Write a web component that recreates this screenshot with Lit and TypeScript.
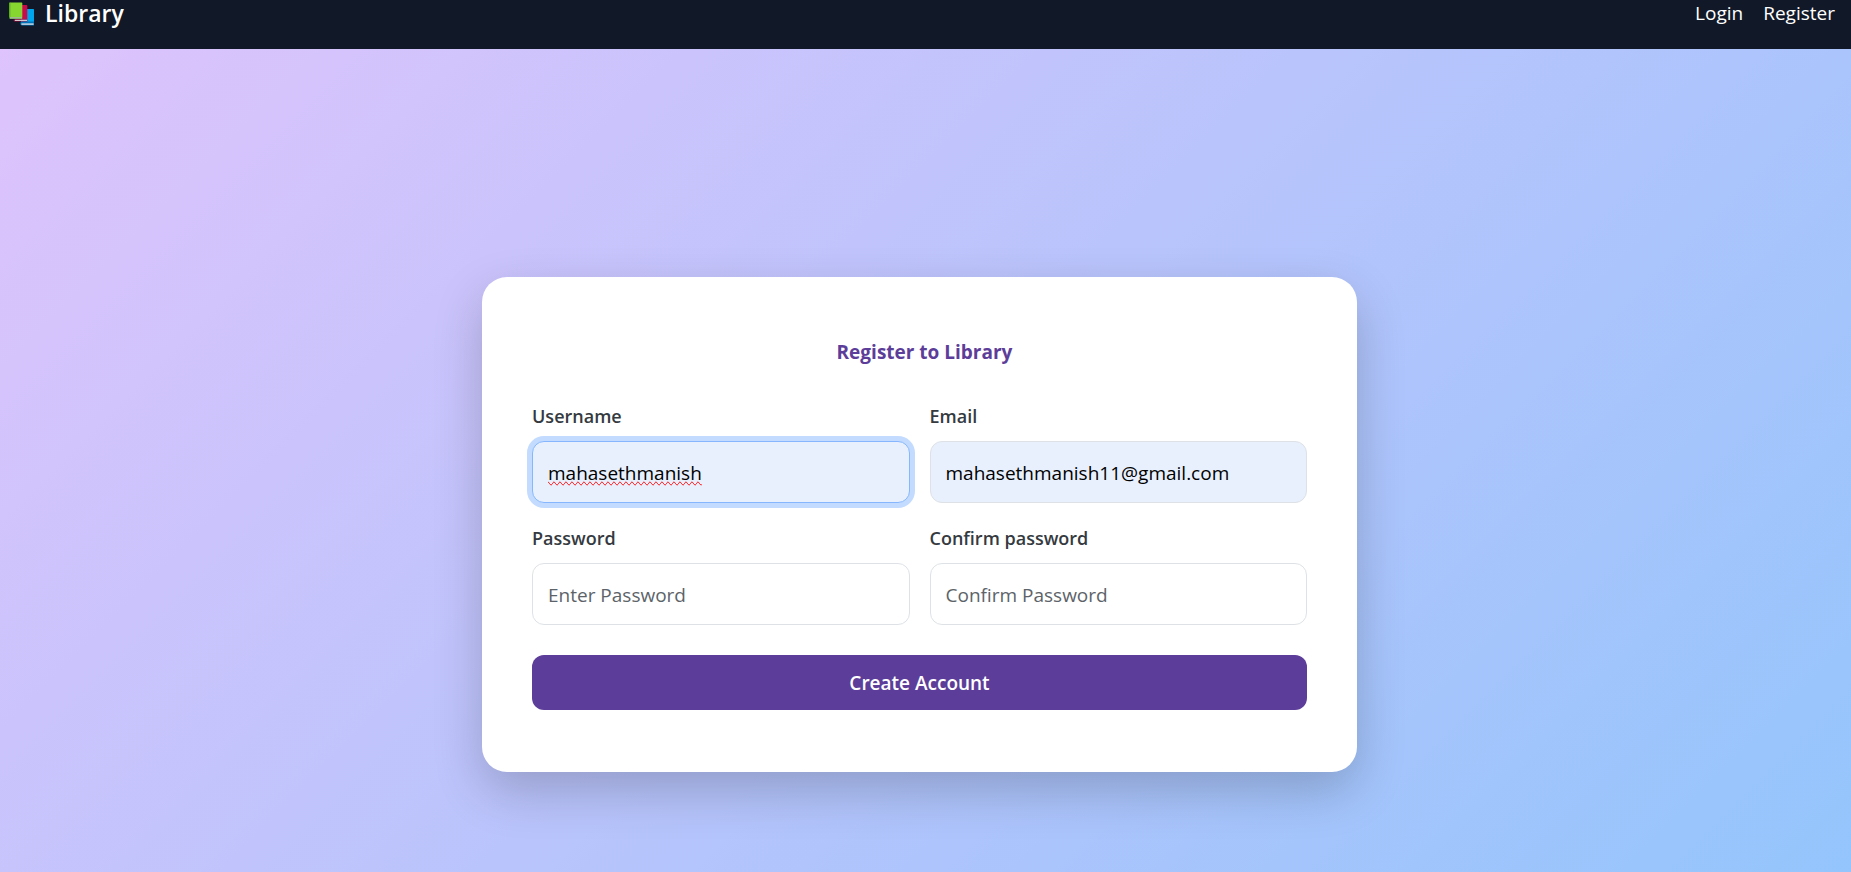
import { LitElement, html, css, svg } from "lit";
import { customElement, property } from "lit/decorators.js";
import { classMap } from "lit/directives/class-map.js";

const booksIcon = svg`
  <path d="M21 9 H33.4 Q34 9 34 9.6 V23.6 H21 Z" fill="#00a6ed"/>
  <path d="M20.4 22.6 L22 21.6 H34 V25.4 H22 Q20.4 25.4 20.4 24 Z" fill="#0074ba"/>
  <path d="M21.4 23.4 H33.6 V24.8 H21.4 Z" fill="#d8dce4"/>
  <path d="M15 5 H26.4 Q27.3 5 27.3 5.8 V19.6 H15 Z" fill="#ca0b4a"/>
  <path d="M13.6 19.6 H27.3 V21.6 H15 Q13.6 21.6 13.6 20.4 Z" fill="#990838"/>
  <path d="M14.8 19.8 H27 V21 H14.8 Z" fill="#d8c8d0"/>
  <path d="M9 4 Q9 2.6 10.4 2.6 H21.6 Q22.3 2.6 22.3 3.4 V17.4 H9 Z" fill="#86d72f"/>
  <path d="M9 4 Q9 2.6 10.4 2.6 V17.4 H9 Z" fill="#5db01c"/>
  <path d="M9 17 H22.3 V19 H10.4 Q9 19 9 17.8 Z" fill="#44911b"/>
  <path d="M10 17.3 H22 V18.5 H10 Z" fill="#c4ccc4"/>
`;

@customElement("site-header")
export class SiteHeader extends LitElement {
  static styles = css`
    :host { display: block; }
    .bar {
      display: flex;
      justify-content: space-between;
      align-items: flex-start;
      padding: 0 16px 22px 8px;
      background: #111827;
      color: #fff;
    }
    a { color: inherit; text-decoration: none; line-height: 27px; }
    .brand {
      display: flex;
      align-items: center;
      gap: 10px;
      font-size: 23px;
      font-weight: 600;
    }
    .links { display: flex; gap: 20px; font-size: 19px; }
    svg { display: block; }
  `;

  render() {
    return html`
      <header class="bar">
        <a class="brand" href="#">
          <svg width="27" height="27" viewBox="8 0 27 27" aria-hidden="true">${booksIcon}</svg>
          Library
        </a>
        <nav class="links">
          <a href="#login">Login</a>
          <a href="#register">Register</a>
        </nav>
      </header>
    `;
  }
}

@customElement("text-field")
export class TextField extends LitElement {
  @property() label = "";
  @property() type = "text";
  @property() value = "";
  @property() placeholder = "";
  @property({ type: Boolean }) filled = false;
  @property({ type: Boolean }) active = false;
  @property({ type: Boolean }) misspelt = false;

  static styles = css`
    :host { display: block; min-width: 0; }
    label {
      display: block;
      margin-bottom: 10px;
      color: #343a40;
      font-size: 18px;
      font-weight: 600;
      line-height: 30px;
    }
    input {
      display: block;
      box-sizing: border-box;
      width: 100%;
      height: 62px;
      padding: 2px 15px 0;
      border: 1px solid #dee2e6;
      border-radius: 12px;
      outline: none;
      background: #fff;
      color: #000;
      font: inherit;
      font-size: 19px;
    }
    input::placeholder { color: #5c6369; opacity: 1; }
    .filled { background: #e8f0fe; }
    .active, input:focus {
      border-color: #86b7fe;
      box-shadow: 0 0 0 5px #c2dbff;
    }
    .misspelt {
      text-decoration: underline wavy #ff1a1a 1px;
      text-decoration-line: spelling-error;
    }
  `;

  render() {
    return html`
      <label for="control">${this.label}</label>
      <input
        id="control"
        class=${classMap({ filled: this.filled, active: this.active, misspelt: this.misspelt })}
        type=${this.type}
        .value=${this.value}
        placeholder=${this.placeholder}
      />
    `;
  }
}

@customElement("app-root")
export class AppRoot extends LitElement {
  static styles = css`
    :host {
      display: flex;
      flex-direction: column;
      min-height: 100vh;
      font-family: "Segoe UI", "Open Sans", "Noto Sans", sans-serif;
    }
    main {
      flex: 1;
      display: flex;
      align-items: center;
      justify-content: center;
      padding: 128px 12px 0 0;
      background: linear-gradient(135deg, #dec3fc, #90c5fc 105%);
    }
    .card {
      box-sizing: border-box;
      width: 100%;
      max-width: 875px;
      padding: 60px 50px 62px;
      border-radius: 25px;
      background: #fff;
      box-shadow: 0 19px 50px rgba(0, 0, 0, 0.2);
    }
    h1 {
      margin: 0 0 34px;
      padding-left: 10px;
      color: #5c3d99;
      font-size: 19px;
      font-weight: 700;
      line-height: 30px;
      text-align: center;
    }
    .fields {
      display: grid;
      grid-template-columns: 1fr 1fr;
      gap: 20px;
    }
    button {
      display: block;
      width: 100%;
      height: 55px;
      margin-top: 30px;
      padding: 0;
      border: 0;
      border-radius: 12px;
      background: #5c3d99;
      color: #fff;
      font: inherit;
      font-size: 19px;
      font-weight: 600;
    }
  `;

  render() {
    return html`
      <site-header></site-header>
      <main>
        <form class="card" @submit=${(e: Event) => e.preventDefault()}>
          <h1>Register to Library</h1>
          <div class="fields">
            <text-field label="Username" value="mahasethmanish" filled active misspelt></text-field>
            <text-field label="Email" type="email" value="mahasethmanish11@gmail.com" filled></text-field>
            <text-field label="Password" type="password" placeholder="Enter Password"></text-field>
            <text-field label="Confirm password" type="password" placeholder="Confirm Password"></text-field>
          </div>
          <button type="submit">Create Account</button>
        </form>
      </main>
    `;
  }
}
